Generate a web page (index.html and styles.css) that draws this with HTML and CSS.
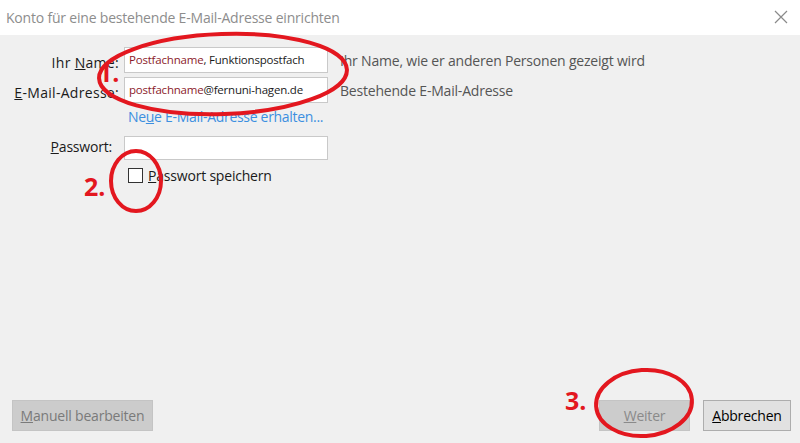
FILE: index.html
```html
<!DOCTYPE html>
<html lang="de">
<head>
<meta charset="utf-8">
<title>Konto einrichten</title>
<link rel="stylesheet" href="styles.css">
</head>
<body>
<div class="window">
  <header class="titlebar">
    <span class="title">Konto für eine bestehende E-Mail-Adresse einrichten</span>
    <svg class="close" width="14" height="14" viewBox="0 0 14 14"><path d="M1 1 L13 13 M13 1 L1 13" stroke="#8a8a8a" stroke-width="1.2" fill="none"/></svg>
  </header>
  <main class="content">
    <div class="form">
      <label class="lbl">Ihr <u>N</u>ame:</label>
      <div class="field"><span class="red">Postfachname</span>, Funktionspostfach</div>
      <span class="hint">Ihr Name, wie er anderen Personen gezeigt wird</span>

      <label class="lbl"><u>E</u>-Mail-Adresse:</label>
      <div class="field"><span class="red">postfachname</span>@fernuni-hagen.de</div>
      <span class="hint">Bestehende E-Mail-Adresse</span>

      <span></span>
      <a class="link">Ne<u>u</u>e E-Mail-Adresse erhalten...</a>

      <label class="lbl pw"><u>P</u>asswort:</label>
      <div class="field pwfield"></div>
      <span></span>

      <span></span>
      <div class="check"><span class="box"></span><span><u>P</u>asswort speichern</span></div>
    </div>
    <footer class="footer">
      <button class="btn disabled"><u>M</u>anuell bearbeiten</button>
      <div class="right">
        <button class="btn disabled weiter"><u>W</u>eiter</button>
        <button class="btn normal"><u>A</u>bbrechen</button>
      </div>
    </footer>
  </main>
  <svg class="marks" width="800" height="443" viewBox="0 0 800 443">
    <g fill="none" stroke="#e3171f" stroke-width="4">
      <ellipse cx="223" cy="74" rx="124" ry="40" transform="rotate(-2 223 74)"/>
      <ellipse cx="136" cy="181" rx="25" ry="30"/>
      <ellipse cx="644" cy="403" rx="48" ry="33" transform="rotate(-4 644 403)"/>
    </g>
  </svg>
  <span class="num n1">1.</span>
  <span class="num n2">2.</span>
  <span class="num n3">3.</span>
</div>
</body>
</html>
```

FILE: styles.css
```css
* { box-sizing: border-box; }
html, body { margin: 0; padding: 0; }
body {
  width: 800px;
  height: 443px;
  overflow: hidden;
  font-family: "Open Sans", "Noto Sans", sans-serif;
  font-size: 14px;
  color: #000;
}
.window {
  position: relative;
  width: 800px;
  height: 443px;
  display: flex;
  flex-direction: column;
  background: #f0f0f0;
}
.titlebar {
  height: 35px;
  background: #fff;
  display: flex;
  align-items: center;
  justify-content: space-between;
  padding: 0 12px 0 6px;
}
.title {
  color: #8d8d8d;
  font-size: 14px;
  letter-spacing: -0.2px;
}
.close { margin-top: -2px; }
.content {
  flex: 1;
  display: flex;
  flex-direction: column;
  justify-content: space-between;
  padding: 12px 0 12px 0;
}
.form {
  display: grid;
  grid-template-columns: 120px 208px 1fr;
  align-items: center;
}
.lbl {
  text-align: right;
  padding-right: 1px;
  color: #1a1a1a;
  white-space: nowrap;
  letter-spacing: 0.3px;
}
.lbl.pw { padding-right: 8px; letter-spacing: -0.2px; }
.field {
  margin-left: 4px;
  height: 26px;
  margin-bottom: 4px;
  background: #fff;
  border: 1px solid #c9c9c9;
  font-size: 11.5px;
  letter-spacing: -0.2px;
  line-height: 24px;
  padding-left: 4px;
  color: #1a1a1a;
  white-space: nowrap;
  overflow: hidden;
}
.pwfield { height: 24px; margin-top: 9px; margin-bottom: 6px; }
.red { color: #8b1a2a; }
.hint {
  padding-left: 12px;
  color: #555;
  margin-bottom: 4px;
  letter-spacing: -0.2px;
  white-space: nowrap;
}
.link {
  grid-column: 2 / 4;
  color: #3c8fe0;
  padding-left: 8px;
  height: 20px;
  line-height: 20px;
  letter-spacing: -0.3px;
  white-space: nowrap;
}
.check {
  grid-column: 2 / 4;
  display: flex;
  align-items: center;
  gap: 5px;
  padding-left: 8px;
  color: #1a1a1a;
  letter-spacing: -0.2px;
}
.box {
  width: 15px;
  height: 15px;
  border: 1px solid #333;
  background: #fff;
}
.footer {
  display: flex;
  justify-content: space-between;
  align-items: flex-end;
  padding: 0 9px 0 12px;
}
.right { display: flex; gap: 13px; }
.btn {
  height: 31px;
  font-family: inherit;
  font-size: 14px;
  padding: 0;
  border: 1px solid #bfbfbf;
  letter-spacing: -0.2px;
  white-space: nowrap;
}
.btn.disabled {
  background: #cccccc;
  border-color: #c4c4c4;
  color: #7a7a7a;
  width: 141px;
}
.btn.weiter { width: 91px; color: #8a8a8a; }
.btn.normal {
  background: #e1e1e1;
  border-color: #adadad;
  color: #000;
  width: 88px;
}
.marks {
  position: absolute;
  left: 0;
  top: 0;
  pointer-events: none;
}
.num {
  position: absolute;
  color: #e3171f;
  font-family: "Open Sans", sans-serif;
  font-weight: 700;
  font-size: 25px;
  line-height: 1;
}
.n1 { left: 98px; top: 60px; }
.n2 { left: 84px; top: 174px; }
.n3 { left: 565px; top: 388px; }
```
